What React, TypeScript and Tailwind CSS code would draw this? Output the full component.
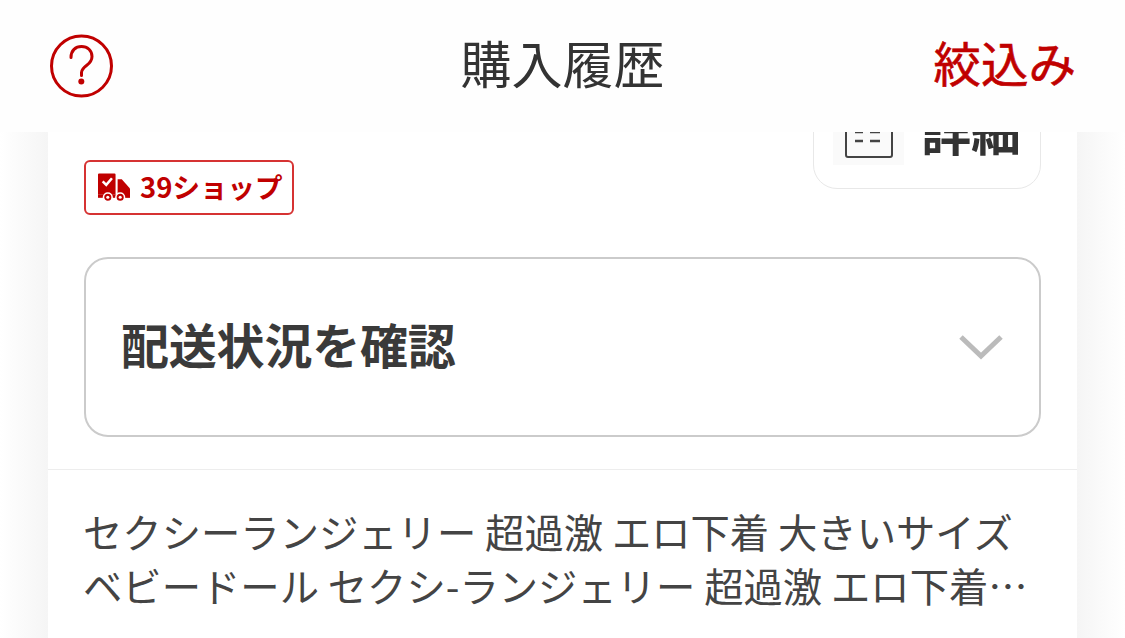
const FONT = "font-['Noto_Sans_CJK_JP','Noto_Sans',sans-serif]";

function HelpIcon() {
  return (
    <svg width="64" height="64" viewBox="0 0 64 64" fill="none" stroke="#c00000" strokeLinecap="round">
      <circle cx="32.500" cy="32" r="30" strokeWidth="3" />
      <path d="M22 23.500C22 16.500 26.500 12.500 32.500 12.500s10.500 4 10.500 10c0 4.500-2.500 6.800-5.500 9-3 2.300-5 4-5 7v3" strokeWidth="3" />
      <circle cx="32.300" cy="47.500" r="3" fill="#c00000" stroke="none" />
    </svg>
  );
}

function TruckIcon() {
  return (
    <svg width="32" height="29" viewBox="0 0 31 28">
      <path fill="#c00000" d="M0 1.500a1 1 0 0 1 1-1h15a1 1 0 0 1 1 1V21H0z" />
      <path fill="#c00000" d="M19 6h4l8 9v8.500H19z" />
      <path fill="#c00000" d="M0 21h31v3H0z" />
      <path fill="none" stroke="#fff" strokeWidth="2.400" d="M4.500 8l3.500 3.500L13.500 5" />
      <circle cx="9.500" cy="23.500" r="4.200" fill="#c00000" stroke="#fff" strokeWidth="1.500" />
      <circle cx="21.500" cy="23.500" r="4.200" fill="#c00000" stroke="#fff" strokeWidth="1.500" />
      <circle cx="9.500" cy="23.500" r="1.500" fill="#fff" />
      <circle cx="21.500" cy="23.500" r="1.500" fill="#fff" />
    </svg>
  );
}

export default function App() {
  return (
    <div className={`${FONT} flex h-[638px] w-[1125px] flex-col overflow-hidden bg-white text-[#333]`}>
      <header className="z-10 flex h-[132px] shrink-0 items-center bg-[#fefefe] px-[49px]">
        <div className="flex-1">
          <HelpIcon />
        </div>
        <h1 className="pb-[8px] text-[51px] leading-none text-[#333]">購入履歴</h1>
        <div className="flex flex-1 justify-end pb-[8px]">
          <button className="text-[47.500px] leading-none text-[#c00000] [-webkit-text-stroke:0.6px_#c00000]">絞込み</button>
        </div>
      </header>

      <main className="min-h-0 flex-1 bg-[linear-gradient(to_right,#fff_0,#f5f5f5_48px,#f5f5f5_1077px,#fff_1125px)] px-[48px]">
        <section className="h-full bg-white">
          <div className="px-[36px] pb-[32px]">
            <div className="flex items-start justify-between">
              <span className="mt-[28px] flex h-[55px] w-[210px] items-center gap-[10px] rounded-[6px] border-2 border-[#d63333] pl-[12px]">
                <TruckIcon />
                <span className="pb-[2px] text-[27.500px] font-bold leading-none text-[#c00000]">39ショップ</span>
              </span>
              <div className="-mt-[44px] flex h-[101px] w-[228px] items-end rounded-b-[24px] border border-[#e8e8e8] pb-[23px] pl-[19px]">
                <span className="flex h-[70px] w-[71px] items-end justify-center bg-[#fafafa] pb-[7px]">
                  <svg width="48" height="48" viewBox="0 0 48 48" fill="none" stroke="#444" strokeWidth="2">
                    <rect x="1" y="-4" width="46" height="51" rx="2" />
                    <path d="M10 22h8M25 22h10M10 31h8M25 31h10" strokeWidth="2.400" />
                  </svg>
                </span>
                <span className="mb-[6px] ml-[17px] text-[50px] font-bold leading-[60px] text-[#333]">詳細</span>
              </div>
            </div>
            <button className="mt-[42px] flex h-[180px] w-full items-center justify-between rounded-[24px] border-2 border-[#cbcbcb] pl-[35px] pr-[36px]">
              <span className="pb-[8px] text-[48px] font-bold leading-none tracking-[-0.2px] text-[#3a3a3a]">配送状況を確認</span>
              <svg width="44" height="26" viewBox="0 0 44 26" fill="none" stroke="#bbb" strokeWidth="5">
                <path d="M2 3l20 19L42 3" />
              </svg>
            </button>
          </div>
          <div className="border-t border-[#ededed] pl-[35px] pt-[34px]">
            <p className="whitespace-nowrap text-[39.350px] leading-[54px] text-[#444]">
              セクシーランジェリー 超過激 エロ下着 大きいサイズ
              <br />
              ベビードール セクシ-ランジェリー 超過激 エロ下着…
            </p>
          </div>
        </section>
      </main>
    </div>
  );
}
